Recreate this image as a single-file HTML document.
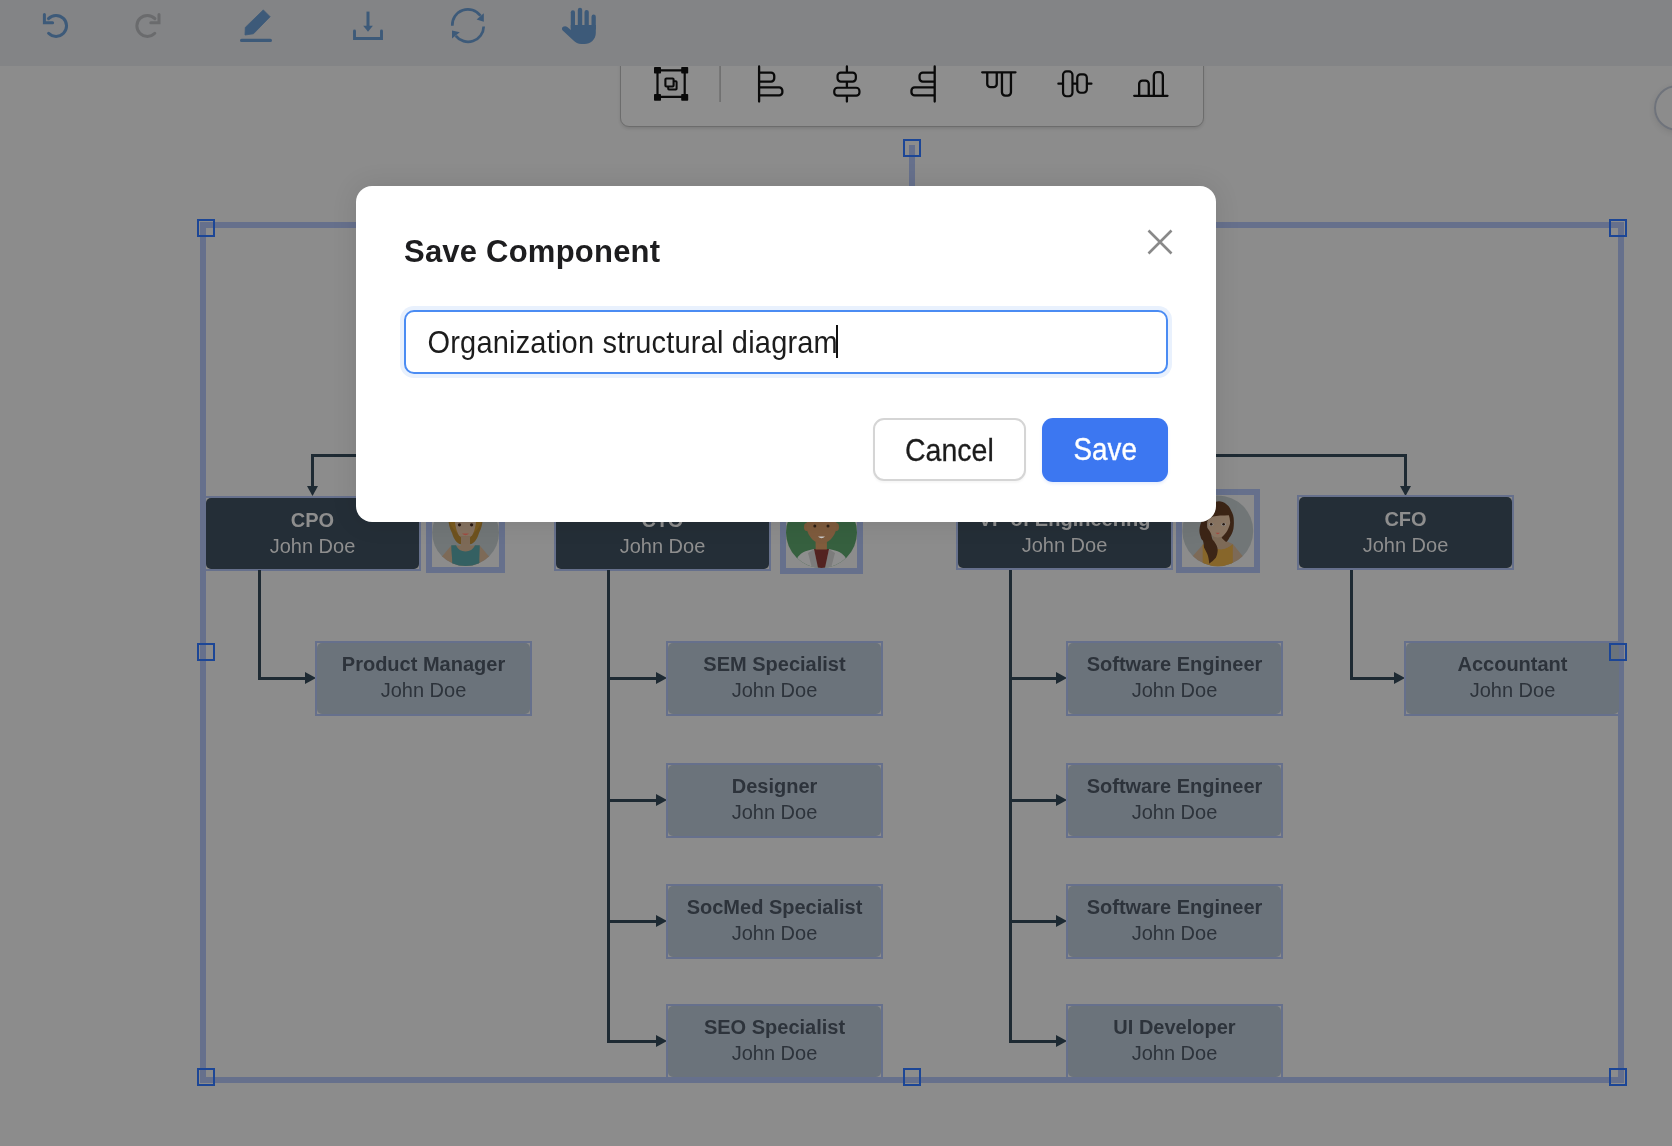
<!DOCTYPE html><html><head><meta charset="utf-8"><style>
*{box-sizing:border-box;margin:0;padding:0}
html,body{width:1672px;height:1146px;overflow:hidden}
body{position:relative;background:#8c8c8c;font-family:"Liberation Sans",sans-serif}
#root{position:absolute;left:0;top:0;width:1672px;height:1146px;will-change:transform}
.abs{position:absolute}
#aligntb{left:620px;top:40px;width:584px;height:87px;background:#8e8e8e;border:1.5px solid #6c6c6c;border-radius:9px;box-shadow:0 2px 3px rgba(0,0,0,0.10)}
#rcirc{left:1654px;top:85px;width:46px;height:46px;border-radius:50%;border:2px solid #6f737b;box-shadow:0 2px 6px rgba(0,0,0,0.10)}
#topbar{left:0;top:0;width:1672px;height:66px;background:#838486}
.fl{position:absolute;background:#66708c}
.hd{position:absolute;width:18px;height:18px;border:2px solid #1c4696}
.nd{position:absolute;border-radius:5px;text-align:center;font-size:20px;line-height:26px;padding-top:8px;white-space:nowrap}
.dk{background:#242e37;color:#8e8e8e;padding-top:9px}
.lt{background:#6b737b;color:#2d333b}
.sb{position:absolute;border:2px solid #66708c}
.t1{font-weight:bold;display:block}
.t2{display:block}
.ln{position:absolute;background:#1e2a33}
#modal{left:356px;top:186px;width:860px;height:336px;background:#fff;border-radius:16px;box-shadow:0 0 26px rgba(0,0,0,0.10)}
</style></head><body><div id="root">
<div id="aligntb" class="abs"></div>
<div id="rcirc" class="abs"></div>
<div id="topbar" class="abs"></div>
<svg class="abs" style="left:0;top:0" width="620" height="66" viewBox="0 0 620 66"><path d="M48.5 18.6 A10.5 10.5 0 1 1 48.6 33.3" fill="none" stroke="#3d5a79" stroke-width="3" stroke-linecap="round"/><path d="M44.4 14.5 V22.7 H52.6" fill="none" stroke="#3d5a79" stroke-width="3" stroke-linecap="round" stroke-linejoin="miter"/><path d="M154.9 18.6 A10.5 10.5 0 1 0 154.8 33.3" fill="none" stroke="#6a6b6d" stroke-width="3" stroke-linecap="round"/><path d="M159.0 14.5 V22.7 H150.8" fill="none" stroke="#6a6b6d" stroke-width="3" stroke-linecap="round"/><path d="M263.3 9.9 L270.1 16.7 L253.4 33.8 L245 35 L245.3 27.4 Z" fill="#3d5a79" stroke="#3d5a79" stroke-width="0.8" stroke-linejoin="round"/><rect x="240" y="38.8" width="32" height="3.2" rx="1.6" fill="#3d5a79"/><rect x="366.5" y="11.6" width="3" height="16" fill="#3d5a79"/><path d="M363.2 25.8 L372.9 25.8 L368 31.8 Z" fill="#3d5a79"/><path d="M354.5 31 V38.5 H381.5 V31" fill="none" stroke="#3d5a79" stroke-width="2.9" stroke-linecap="round"/><path d="M452.3 25.8 A15.6 15.6 0 0 1 480.5 15.8" fill="none" stroke="#3d5a79" stroke-width="2.7"/><path d="M476.6 19.6 L483.8 13.2 L483.8 21.7 Z" fill="#3d5a79"/><path d="M483.7 26.5 A15.6 15.6 0 0 1 455.8 35.8" fill="none" stroke="#3d5a79" stroke-width="2.7"/><path d="M452 30.5 L452 38.6 L459.8 32.2 Z" fill="#3d5a79"/><g fill="#3d5a79"><rect x="570.8" y="10.2" width="4.2" height="20" rx="2.1"/><rect x="577.8" y="7.8" width="4.4" height="22" rx="2.2"/><rect x="584.5" y="9.9" width="4.3" height="20" rx="2.15"/><rect x="591.5" y="14.6" width="4.3" height="16" rx="2.15"/><path d="M570.8 25 H595.8 V33 C595.8 39.5 590.5 44 584.5 44 H581.5 C578 44 575.5 42.7 573.2 40.3 L562.7 30.5 C561.5 29.3 561.8 27.6 563 26.8 C564.5 25.8 566 26 567.3 27 L570.8 30 Z"/></g></svg>
<svg class="abs" style="left:620px;top:60px" width="584" height="50" viewBox="620 60 584 50"><g fill="none" stroke="#0a0a0a" stroke-width="2.2" stroke-linecap="round" stroke-linejoin="round"><rect x="657.5" y="70.3" width="27.2" height="26.6" stroke-linecap="butt"/><rect x="665.4" y="78.5" width="8.2" height="8" rx="1" stroke-width="2.1"/><path d="M668.2 87.6 V88.8 Q668.2 89.6 669 89.6 H675.8 Q676.6 89.6 676.6 88.8 V82 Q676.6 81.2 675.8 81.2 H674.8" stroke-width="2"/><path d="M759.1 66.5 V101.5 M759.1 72.55000000000001 H771.05 A3.2 3.2 0 0 1 774.25 75.75 V78.35 A3.2 3.2 0 0 1 771.05 81.55 H759.1 M759.1 87.45 H779.15 A3.2 3.2 0 0 1 782.35 90.65 V92.15 A3.2 3.2 0 0 1 779.15 95.35 H759.1 M846.9 66.5 V71.4 M846.9 82.7 V86.5 M846.9 96.8 V101.5 M934.7 66.5 V101.5 M934.7 72.55000000000001 H922.75 A3.2 3.2 0 0 0 919.55 75.75 V78.35 A3.2 3.2 0 0 0 922.75 81.55 H934.7 M934.7 87.45 H914.65 A3.2 3.2 0 0 0 911.4499999999999 90.65 V92.15 A3.2 3.2 0 0 0 914.65 95.35 H934.7 M982.2 72.3 H1015.5 M987.25 72.3 V83.95 A3.2 3.2 0 0 0 990.45 87.14999999999999 H993.55 A3.2 3.2 0 0 0 996.75 83.95 V72.3 M1001.9499999999999 72.3 V92.35 A3.2 3.2 0 0 0 1005.15 95.55 H1007.75 A3.2 3.2 0 0 0 1010.95 92.35 V72.3 M1058.4 83.7 H1061.9 M1073.6 83.7 H1076.1 M1088 83.7 H1091.4 M1134.2 95.8 H1167.5 M1139.15 95.8 V83.85 A3.2 3.2 0 0 1 1142.35 80.65 H1145.55 A3.2 3.2 0 0 1 1148.75 83.85 V95.8 M1153.8500000000001 95.8 V75.35 A3.2 3.2 0 0 1 1157.05 72.15 H1159.65 A3.2 3.2 0 0 1 1162.85 75.35 V95.8" stroke-width="2.3"/><rect x="837.55" y="72.55" width="18.30" height="9.00" rx="3.2"/><rect x="834.25" y="87.75" width="25.20" height="7.90" rx="3.2"/><rect x="1063.05" y="71.45" width="9.40" height="24.80" rx="3.4"/><rect x="1077.25" y="74.35" width="9.60" height="18.40" rx="3.4"/></g><g fill="#0a0a0a"><rect x="654" y="67" width="7" height="6.6" rx="0.8"/><rect x="681.2" y="67" width="7" height="6.6" rx="0.8"/><rect x="654" y="94" width="7" height="6.8" rx="0.8"/><rect x="681.2" y="94" width="7" height="6.8" rx="0.8"/></g><rect x="719.3" y="66" width="1.6" height="36" fill="#6e6e6e"/></svg>
<div class="fl" style="left:200px;top:222px;width:1424px;height:6px"></div>
<div class="fl" style="left:200px;top:1077px;width:1424px;height:6px"></div>
<div class="fl" style="left:200px;top:228px;width:6px;height:849px"></div>
<div class="fl" style="left:1618px;top:228px;width:6px;height:849px"></div>
<div class="fl" style="left:909px;top:145px;width:6px;height:77px"></div>
<div class="ln" style="left:311px;top:453.6px;width:1096px;height:3px"></div>
<div class="ln" style="left:311px;top:453.6px;width:3px;height:33.39999999999998px"></div>
<svg class="abs" style="left:306.7px;top:486px" width="11" height="10"><path d="M0 0 L11 0 L5.5 10 Z" fill="#1e2a33"/></svg>
<div class="ln" style="left:1404px;top:453.6px;width:3px;height:33.39999999999998px"></div>
<svg class="abs" style="left:1399.7px;top:486px" width="11" height="10"><path d="M0 0 L11 0 L5.5 10 Z" fill="#1e2a33"/></svg>
<div class="sb" style="left:204px;top:496px;width:217px;height:75px"></div>
<div class="nd dk" style="left:206px;top:498px;width:213px;height:71px"><span class="t1">CPO</span><span class="t2">John Doe</span></div>
<div class="sb" style="left:554px;top:496px;width:217px;height:75px"></div>
<div class="nd dk" style="left:556px;top:498px;width:213px;height:71px"><span class="t1">CTO</span><span class="t2">John Doe</span></div>
<div class="sb" style="left:956px;top:495px;width:217px;height:75px"></div>
<div class="nd dk" style="left:958px;top:497px;width:213px;height:71px"><span class="t1">VP of Engineering</span><span class="t2">John Doe</span></div>
<div class="sb" style="left:1297px;top:495.3px;width:217px;height:75px"></div>
<div class="nd dk" style="left:1299px;top:497.3px;width:213px;height:71px"><span class="t1">CFO</span><span class="t2">John Doe</span></div>
<div class="ln" style="left:258px;top:570px;width:3px;height:109px"></div>
<div class="ln" style="left:258px;top:677px;width:47px;height:3px"></div>
<svg class="abs" style="left:304.5px;top:672px" width="11" height="12"><path d="M0 0 L11 6 L0 12 Z" fill="#1e2a33"/></svg>
<div class="sb" style="left:315px;top:641px;width:217px;height:75px"></div>
<div class="nd lt" style="left:317px;top:643px;width:213px;height:71px"><span class="t1">Product Manager</span><span class="t2">John Doe</span></div>
<div class="ln" style="left:607px;top:570px;width:3px;height:472px"></div>
<div class="ln" style="left:607px;top:677px;width:49px;height:3px"></div>
<svg class="abs" style="left:655.5px;top:672px" width="11" height="12"><path d="M0 0 L11 6 L0 12 Z" fill="#1e2a33"/></svg>
<div class="sb" style="left:666px;top:641px;width:217px;height:75px"></div>
<div class="nd lt" style="left:668px;top:643px;width:213px;height:71px"><span class="t1">SEM Specialist</span><span class="t2">John Doe</span></div>
<div class="ln" style="left:607px;top:798.5px;width:49px;height:3px"></div>
<svg class="abs" style="left:655.5px;top:793.5px" width="11" height="12"><path d="M0 0 L11 6 L0 12 Z" fill="#1e2a33"/></svg>
<div class="sb" style="left:666px;top:762.5px;width:217px;height:75px"></div>
<div class="nd lt" style="left:668px;top:764.5px;width:213px;height:71px"><span class="t1">Designer</span><span class="t2">John Doe</span></div>
<div class="ln" style="left:607px;top:920px;width:49px;height:3px"></div>
<svg class="abs" style="left:655.5px;top:915px" width="11" height="12"><path d="M0 0 L11 6 L0 12 Z" fill="#1e2a33"/></svg>
<div class="sb" style="left:666px;top:884px;width:217px;height:75px"></div>
<div class="nd lt" style="left:668px;top:886px;width:213px;height:71px"><span class="t1">SocMed Specialist</span><span class="t2">John Doe</span></div>
<div class="ln" style="left:607px;top:1040px;width:49px;height:3px"></div>
<svg class="abs" style="left:655.5px;top:1035px" width="11" height="12"><path d="M0 0 L11 6 L0 12 Z" fill="#1e2a33"/></svg>
<div class="sb" style="left:666px;top:1004px;width:217px;height:75px"></div>
<div class="nd lt" style="left:668px;top:1006px;width:213px;height:71px"><span class="t1">SEO Specialist</span><span class="t2">John Doe</span></div>
<div class="ln" style="left:1009px;top:570px;width:3px;height:472px"></div>
<div class="ln" style="left:1009px;top:677px;width:47px;height:3px"></div>
<svg class="abs" style="left:1055.5px;top:672px" width="11" height="12"><path d="M0 0 L11 6 L0 12 Z" fill="#1e2a33"/></svg>
<div class="sb" style="left:1066px;top:641px;width:217px;height:75px"></div>
<div class="nd lt" style="left:1068px;top:643px;width:213px;height:71px"><span class="t1">Software Engineer</span><span class="t2">John Doe</span></div>
<div class="ln" style="left:1009px;top:798.5px;width:47px;height:3px"></div>
<svg class="abs" style="left:1055.5px;top:793.5px" width="11" height="12"><path d="M0 0 L11 6 L0 12 Z" fill="#1e2a33"/></svg>
<div class="sb" style="left:1066px;top:762.5px;width:217px;height:75px"></div>
<div class="nd lt" style="left:1068px;top:764.5px;width:213px;height:71px"><span class="t1">Software Engineer</span><span class="t2">John Doe</span></div>
<div class="ln" style="left:1009px;top:920px;width:47px;height:3px"></div>
<svg class="abs" style="left:1055.5px;top:915px" width="11" height="12"><path d="M0 0 L11 6 L0 12 Z" fill="#1e2a33"/></svg>
<div class="sb" style="left:1066px;top:884px;width:217px;height:75px"></div>
<div class="nd lt" style="left:1068px;top:886px;width:213px;height:71px"><span class="t1">Software Engineer</span><span class="t2">John Doe</span></div>
<div class="ln" style="left:1009px;top:1040px;width:47px;height:3px"></div>
<svg class="abs" style="left:1055.5px;top:1035px" width="11" height="12"><path d="M0 0 L11 6 L0 12 Z" fill="#1e2a33"/></svg>
<div class="sb" style="left:1066px;top:1004px;width:217px;height:75px"></div>
<div class="nd lt" style="left:1068px;top:1006px;width:213px;height:71px"><span class="t1">UI Developer</span><span class="t2">John Doe</span></div>
<div class="ln" style="left:1350px;top:570px;width:3px;height:109px"></div>
<div class="ln" style="left:1350px;top:677px;width:44px;height:3px"></div>
<svg class="abs" style="left:1393.5px;top:672px" width="11" height="12"><path d="M0 0 L11 6 L0 12 Z" fill="#1e2a33"/></svg>
<div class="sb" style="left:1404px;top:641px;width:217px;height:75px"></div>
<div class="nd lt" style="left:1406px;top:643px;width:213px;height:71px"><span class="t1">Accountant</span><span class="t2">John Doe</span></div>
<div class="abs" style="left:426px;top:493px;width:79px;height:80px;border:6px solid #66708c"></div>
<div class="abs" style="left:780px;top:490px;width:83px;height:84px;border:6px solid #66708c"></div>
<div class="abs" style="left:1176px;top:489px;width:84px;height:84px;border:6px solid #66708c"></div>
<svg class="abs" style="left:420px;top:490px" width="90" height="90" viewBox="420 490 90 90"><defs><clipPath id="c1"><circle cx="465.6" cy="532.7" r="33.4"/></clipPath></defs><circle cx="465.6" cy="532.7" r="33.4" fill="#717677"/><g clip-path="url(#c1)"><path d="M442 556.5 L451.3 545.5 L479.7 545.5 L489 556.5 L492 570 L438 570 Z" fill="#7d6a57"/><path d="M450 505 C447 515 448 526 452 533 C454 540 458 545 462 544 L458 520 Z" fill="#6e521f"/><path d="M481 505 C484 515 483 526 479 533 C477 540 473 545 469 544 L473 520 Z" fill="#6e521f"/><path d="M446.5 510 C448 522 452 528 457 533 L458 522 Z" fill="#7a5a1e"/><path d="M484.5 510 C483 522 479 528 474 533 L473 522 Z" fill="#7a5a1e"/><path d="M453.9 500 C453.5 515 455 530 459 535.5 C462 538.5 469 538.5 472 535.5 C476 530 477.5 515 477.1 500 Z" fill="#857260"/><rect x="461" y="536" width="9" height="10" fill="#7d6a57"/><path d="M451.3 545.3 C451 552 453 560 451.8 566.5 L480 566.5 C478.5 560 480 552 479.7 545.3 L475 545.3 C473 549.5 470 551.5 465.5 551.5 C461 551.5 458 549.5 456 545.3 Z" fill="#346062"/><circle cx="459.5" cy="524.8" r="1.6" fill="#2a1a12"/><circle cx="471.6" cy="524.8" r="1.6" fill="#2a1a12"/><path d="M462 533.5 Q465.5 537 469 533.5 Z" fill="#a04c42"/></g></svg>
<svg class="abs" style="left:776px;top:490px" width="90" height="90" viewBox="776 490 90 90"><defs><clipPath id="c2"><circle cx="821.5" cy="532.5" r="35.5"/></clipPath></defs><g clip-path="url(#c2)"><rect x="780" y="490" width="90" height="90" fill="#36603f"/><path d="M797 558.4 C800 553 805 550.8 814 549 L829 549 C838 550.8 843 553 846 558.4 L846 575 L797 575 Z" fill="#8e8e8e"/><path d="M808 553 L814 549 L818 568 L812 568 Z" fill="#7c7c7c"/><path d="M835 553 L829 549 L825 568 L831 568 Z" fill="#7c7c7c"/><path d="M814 549 L829 549 L825 568 L818 568 Z" fill="#532321"/><rect x="815.6" y="540" width="11.3" height="9.5" fill="#805c3c"/><ellipse cx="806.6" cy="527" rx="2.6" ry="4" fill="#7d5a3c"/><ellipse cx="836.4" cy="527" rx="2.6" ry="4" fill="#7d5a3c"/><path d="M807 505 L836 505 L836.5 528 C835 537 828 543.5 821.5 543.5 C815 543.5 808 537 806.5 528 Z" fill="#7e5b3d"/><path d="M807.8 505 L835.2 505 L835.2 520.5 L807.8 520.5 Z" fill="#8a4a1c"/><circle cx="814.8" cy="526" r="1.5" fill="#2e2117"/><circle cx="828" cy="526" r="1.5" fill="#2e2117"/><path d="M818 536.5 Q821.5 540 825 536.5 Z" fill="#c8c8c8"/></g></svg>
<svg class="abs" style="left:1176px;top:488px" width="90" height="90" viewBox="1176 488 90 90"><defs><clipPath id="c3"><circle cx="1217.8" cy="530.9" r="35.4"/></clipPath></defs><circle cx="1217.8" cy="530.9" r="35.4" fill="#717677"/><g clip-path="url(#c3)"><path d="M1193.5 555.2 L1203 544.5 L1232.8 544.1 L1242.6 555.9 L1248 575 L1188 575 Z" fill="#7d6a57"/><path d="M1202.7 544.5 L1207 544.5 C1212 548 1217 549.5 1221.6 549.3 C1226 549 1229 547 1232.8 544.1 L1232.8 567 L1202.7 567 Z" fill="#87662a"/><path d="M1212.5 536 L1224.3 536 L1224.3 540 C1228 542 1231 543 1232.8 544.1 C1229 547 1226 549 1221.6 549.3 C1217 549.5 1212 548 1207 544.5 L1203 544.5 C1207 542 1210 541 1212.5 539.5 Z" fill="#7d6a57"/><path d="M1207.3 514 L1230.2 514 L1230.2 527 C1228 533 1223 537.5 1217.7 537.5 C1212.5 537.5 1208 533 1207.3 527 Z" fill="#8a7562"/><path d="M1219 501.2 C1224 501.5 1229 505 1230.8 510 C1233 514 1233.8 517 1233.8 519.9 C1234 523 1233.9 526 1233.4 529 C1232.5 533 1231 535.5 1229.5 537.5 C1228.5 539.5 1227.5 541 1226.2 542.1 C1224.5 540.5 1222.5 539 1221.6 537.5 C1224 535.5 1226 533 1227.5 530.3 C1229 527 1230 525 1230.2 522.5 C1230 520 1229.5 517 1228.8 515.3 C1223 515.5 1217 515.5 1213.1 516.6 C1210.5 518 1208.5 519.5 1207.3 521.2 C1207 524 1207 526 1207.3 527.7 C1209 530 1210.5 532 1211.2 534.3 C1211.5 536 1212 538 1212.5 539.5 C1214 541 1215 542.5 1215.8 544.1 C1217 546 1217.7 548 1217.7 550.6 C1217.5 553 1217 555.5 1215.8 557.8 C1214 560 1211.5 562 1209.2 563.7 C1209 560 1208.5 557 1207.3 553.9 C1206 551 1204.8 549 1204 547.4 C1203.8 545 1203.5 542.5 1203 540.8 C1201.5 539 1200.7 538 1200.7 536.9 C1199.5 534 1199.4 532 1199.4 530.3 C1199.5 528 1200 526 1200.4 524.5 C1202 520 1205 513 1208 509 C1211 504 1215 501 1219 501.2 Z" fill="#3c2516"/><ellipse cx="1211.2" cy="524.5" rx="2.2" ry="1.4" fill="#9a9a9a"/><ellipse cx="1223.6" cy="524.5" rx="2.2" ry="1.4" fill="#9a9a9a"/><circle cx="1211.2" cy="524.3" r="1.3" fill="#2a1a12"/><circle cx="1223.6" cy="524.3" r="1.3" fill="#2a1a12"/><path d="M1215.5 532.8 Q1217.7 535.5 1220 532.8 Z" fill="#a04c42"/></g></svg>
<div class="hd" style="left:197px;top:219px"></div>
<div class="hd" style="left:197px;top:643px"></div>
<div class="hd" style="left:197px;top:1068px"></div>
<div class="hd" style="left:903px;top:1068px"></div>
<div class="hd" style="left:1609px;top:219px"></div>
<div class="hd" style="left:1609px;top:643px"></div>
<div class="hd" style="left:1609px;top:1068px"></div>
<div class="hd" style="left:903px;top:139px"></div>
<div id="modal" class="abs"></div>
<div class="abs" style="left:404px;top:236px;font-size:31px;letter-spacing:0.22px;font-weight:bold;color:#1d1d1f;line-height:31px;white-space:nowrap">Save Component</div>
<svg class="abs" style="left:1144px;top:226px" width="32" height="32"><path d="M4.5 4.5 L27.5 27.5 M27.5 4.5 L4.5 27.5" stroke="#898989" stroke-width="2.6" stroke-linecap="butt"/></svg>
<div class="abs" style="left:400px;top:306px;width:772px;height:72px;border-radius:14px;background:#e9f1fd"></div>
<div class="abs" style="left:404px;top:310px;width:764px;height:64px;border-radius:10px;border:2.2px solid #4b8cf3;background:#fff"></div>
<div class="abs" style="left:427.5px;top:327.1px;font-size:29px;letter-spacing:0.19px;color:#1c1c1c;line-height:32px;white-space:nowrap;transform:scaleY(1.06);transform-origin:0 26px">Organization structural diagram</div>
<div class="abs" style="left:835.5px;top:325px;width:2px;height:33px;background:#111"></div>
<div class="abs" style="left:872.8px;top:418.3px;width:153px;height:63px;border-radius:11px;border:2px solid #d5d5d5;background:#fff;box-shadow:0 2px 2px rgba(0,0,0,0.035)"></div>
<div class="abs" style="left:905px;top:436px;font-size:28.5px;color:#1c1c1c;line-height:30px;white-space:nowrap;transform:scaleY(1.08);transform-origin:0 100%;-webkit-text-stroke:0.25px #1c1c1c">Cancel</div>
<div class="abs" style="left:1042px;top:418px;width:126px;height:64px;border-radius:11px;background:#3c77f1;box-shadow:0 2px 3px rgba(59,119,241,0.12)"></div>
<div class="abs" style="left:1073.5px;top:437px;font-size:27.8px;color:#fff;line-height:30px;white-space:nowrap;transform:scaleY(1.1);transform-origin:0 100%;-webkit-text-stroke:0.35px #fff">Save</div>
</div></body></html>
